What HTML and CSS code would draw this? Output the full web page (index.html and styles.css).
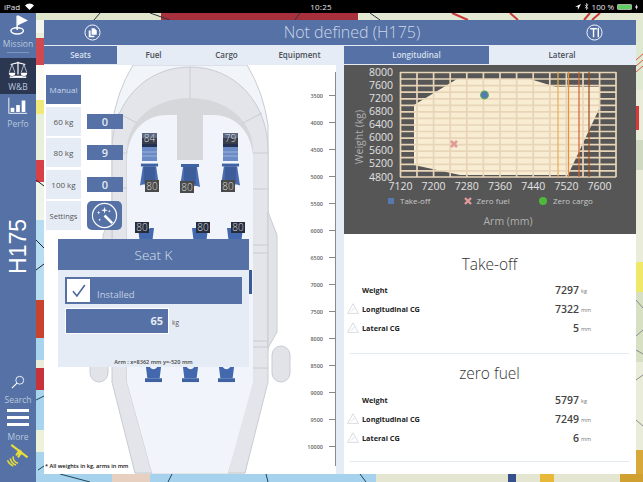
FILE: index.html
```html
<!DOCTYPE html>
<html lang="en">
<head>
<meta charset="utf-8">
<title>Not defined (H175)</title>
<link rel="stylesheet" href="styles.css">
</head>
<body>
<div class="screen">
  <svg class="map" viewBox="0 0 643 482" aria-hidden="true">
    <rect width="643" height="482" fill="#e9ecd8"/>
    <rect x="36" y="13" width="8" height="20" fill="#f4f6ee"/>
    <rect x="36" y="38" width="8" height="27" fill="#cf4a50"/>
    <rect x="36" y="65" width="8" height="35" fill="#fbfbf4"/>
    <rect x="36" y="100" width="8" height="14" fill="#f0e878"/>
    <rect x="36" y="114" width="8" height="46" fill="#e8f0dc"/>
    <rect x="36" y="160" width="8" height="22" fill="#d84048"/>
    <rect x="36" y="182" width="8" height="38" fill="#eef4e8"/>
    <rect x="36" y="220" width="8" height="80" fill="#b8dcf0"/>
    <rect x="36" y="300" width="8" height="38" fill="#c8422c"/>
    <rect x="36" y="338" width="8" height="22" fill="#a8d4ee"/>
    <rect x="36" y="368" width="8" height="22" fill="#c8323a"/>
    <rect x="36" y="390" width="8" height="40" fill="#a8d4ee"/>
    <rect x="36" y="430" width="8" height="22" fill="#eef2d8"/>
    <rect x="36" y="452" width="8" height="22" fill="#a8d4ee"/>
    <rect x="36" y="13" width="125" height="7" fill="#dfe6cc"/>
    <rect x="161" y="13" width="197" height="7" fill="#a8303c"/>
    <rect x="358" y="13" width="285" height="7" fill="#e2e8d2"/>
    <path d="M452 13l16 7M510 13l8 7M590 13l-6 7M600 13l-8 7" stroke="#c83a3a" stroke-width="2"/>
    <path d="M300 13l-5 7M370 13l10 7M100 13l-6 7M150 13l20 7" stroke="#334" stroke-width="1"/>
    <rect x="636" y="20" width="7" height="70" fill="#dfe8d0"/>
    <path d="M636 60l7-6M636 66l7-6M636 72l7-6" stroke="#d85a4a" stroke-width="1"/>
    <rect x="636" y="106" width="3" height="24" fill="#d83838"/>
    <rect x="636" y="140" width="7" height="30" fill="#cfd8c0"/>
    <rect x="636" y="262" width="7" height="30" fill="#f0e868"/>
    <rect x="636" y="292" width="7" height="70" fill="#d8e0c4"/>
    <path d="M636 300l7 8M643 330l-7 6M636 350l7 4M636 380l7-5M636 420l7 6" stroke="#667" stroke-width=".7"/>
    <rect x="636" y="450" width="7" height="32" fill="#d8a838"/>
    <rect x="36" y="474" width="340" height="8" fill="#a6d2ee"/>
    <rect x="376" y="474" width="267" height="8" fill="#e4e6d2"/>
    <rect x="112" y="474" width="38" height="8" fill="#e8d0c0"/>
    <rect x="508" y="474" width="8" height="8" fill="#35508c"/>
    <rect x="540" y="474" width="14" height="8" fill="#e8b838"/>
    <rect x="620" y="474" width="23" height="8" fill="#d0a030"/>
    <path d="M36 400l8-4M38 470l6-4M172 474l-4 8M266 474l2 8M360 474l6 8M60 474l30 8" stroke="#245" stroke-width="1" fill="none"/>
    <path d="M36 180l8 6M36 240l8 8M36 270l8-6" stroke="#223" stroke-width="1"/>
  </svg>

  <div class="status">
    <div class="status-left">
      <span>iPad</span>
      <svg class="wifi" viewBox="0 0 12 9" aria-hidden="true"><path d="M6 9L0 3a8.500 8.500 0 0 1 12 0z" fill="#fff"/></svg>
    </div>
    <span class="status-time">10:25</span>
    <div class="status-right">
      <svg class="loc" viewBox="0 0 8 8" aria-hidden="true"><path d="M8 0L0 3.600h3.800V8z" fill="#fff"/></svg>
      <svg class="bt" viewBox="0 0 6 9" aria-hidden="true"><path d="M1 2.200l4 4.300L3 8.500v-8l2 2-4 4.300" fill="none" stroke="#fff" stroke-width=".8"/></svg>
      <span>100 %</span>
      <span class="battery"><span class="battery-fill"></span></span>
      <svg class="bolt" viewBox="0 0 4 8" aria-hidden="true"><path d="M2.600 0L0 4.600h1.600L1.200 8 4 3.200H2.300z" fill="#fff"/></svg>
    </div>
  </div>

  <div class="layout">
    <nav class="nav">
      <div class="nav-item nav-mission">
        <svg class="nav-icon" viewBox="0 0 24 24" aria-hidden="true">
          <path d="M11 1l0 17" stroke="#fff" stroke-width="1.800"/>
          <path d="M11.500 0L24 6.500l-12.500 6z" fill="#fff"/>
          <ellipse cx="11" cy="19" rx="7.500" ry="3.800" fill="none" stroke="#fff" stroke-width="1.800"/>
        </svg>
        <span>Mission</span>
      </div>
      <div class="nav-sep"></div>
      <div class="nav-item nav-active">
        <svg class="nav-icon" viewBox="0 0 24 20" aria-hidden="true">
          <path d="M12 1v14M4 4l8-2 8 2M7 17h10" stroke="#fff" stroke-width="1.300" fill="none"/>
          <path d="M2 13h7a3.500 3.500 0 0 1-7 0zM15 13h7a3.500 3.500 0 0 1-7 0z" fill="#fff"/>
          <path d="M5.500 4L2.500 12.500M5.500 4l3 8.500M18.500 4l-3 8.500M18.500 4l3 8.500" stroke="#fff" stroke-width=".7"/>
          <rect x="3" y="17" width="18" height="1.600" fill="#fff"/>
        </svg>
        <span>W&amp;B</span>
      </div>
      <div class="nav-item nav-perfo">
        <svg class="nav-icon" viewBox="0 0 24 20" aria-hidden="true">
          <path d="M2 1v17h20" stroke="#fff" stroke-width="1" fill="none"/>
          <rect x="4" y="12" width="4" height="4.500" fill="#fff"/>
          <rect x="10" y="9" width="4" height="7.500" fill="#fff"/>
          <rect x="16" y="4" width="4" height="12.500" fill="#fff"/>
        </svg>
        <span>Perfo</span>
      </div>
      <div class="nav-logo">H175</div>
      <div class="nav-item nav-search">
        <svg class="nav-icon-small" viewBox="0 0 16 16" aria-hidden="true">
          <circle cx="10" cy="6" r="4.500" fill="none" stroke="#fff" stroke-width="1"/>
          <path d="M6.800 9.200L1 15" stroke="#fff" stroke-width="1.300"/>
        </svg>
        <span>Search</span>
      </div>
      <div class="nav-item nav-more">
        <div class="burger"><i></i><i></i><i></i></div>
        <span>More</span>
      </div>
      <svg class="nav-sat" viewBox="0 0 24 24" aria-hidden="true">
        <path d="M5 1l17 13M14 6l-4 6M16 8l-4 6" stroke="#e6dc3c" stroke-width="2.200" fill="none"/>
        <circle cx="14" cy="9" r="2.600" fill="#e6dc3c"/>
        <path d="M7 13a6 6 0 0 0 5 7M4 15a9 9 0 0 0 6 7M1 17a11 11 0 0 0 6 6" stroke="#e6dc3c" stroke-width="1.600" fill="none"/>
      </svg>
    </nav>

    <main class="main">
      <header class="topbar">
        <svg class="top-icon" viewBox="0 0 18 18" aria-hidden="true">
          <circle cx="9" cy="9" r="8" fill="none" stroke="#fff" stroke-width="1"/>
          <path d="M8 4.500h3l2.500 2.500v4.500H8z" fill="#fff"/>
          <path d="M5 7h2v5.500h4V14H5z" fill="#fff"/>
        </svg>
        <h1 class="title">Not defined (H175)</h1>
        <svg class="top-icon" viewBox="0 0 18 18" aria-hidden="true">
          <circle cx="9" cy="9" r="8" fill="none" stroke="#fff" stroke-width="1"/>
          <path d="M4.500 5h7M8 5v9M13 4v10" stroke="#fff" stroke-width="1.500" fill="none"/>
        </svg>
      </header>

      <div class="columns">
        <section class="left">
          <div class="tabs tabs-left">
            <div class="tab tab-on">Seats</div>
            <div class="tab">Fuel</div>
            <div class="tab">Cargo</div>
            <div class="tab">Equipment</div>
          </div>

          <div class="canvas">
            <svg class="plan" viewBox="44 65 292 409" aria-hidden="true">
              <defs>
                <symbol id="seat-front" viewBox="0 0 20 24">
                  <path d="M3 3h14l3 20-3-1H3l-3 1z" fill="#4a6db2"/>
                  <rect x="1" y="0" width="18" height="3" fill="#3f62a4"/>
                  <rect x="4" y="3" width="12" height="17" fill="#3c5c9a"/>
                </symbol>
                <symbol id="seat-back" viewBox="0 0 18 16">
                  <path d="M1 0h4q4 5 8 0h4l-1.500 12h-13z" fill="#4468ad"/>
                  <rect x="0" y="12" width="18" height="4" fill="#3f62a4"/>
                </symbol>
              </defs>

              <path class="hull" d="M133 65h114q16 26 21 60v225l-23 123h-110l-23-123V125q5-34 21-60z"/>
              <path class="wall" d="M112 150c0-46 32-83 78-83s78 37 78 83v232l-23 91h-17l20-91V150H127v232l25 91h-17l-23-91z"/>
              <path class="wing" d="M268 212l9 23v97l-9 16zM112 212l-9 23v97l9 16z"/>
              <rect class="wing" x="272" y="346" width="18" height="36" rx="9"/>
              <rect class="wing" x="90" y="346" width="18" height="36" rx="9"/>
              <path class="ring" d="M127 150c0-30 28-52 63-52s63 22 63 52v4h-126z"/>
              <path class="cabin" d="M127 160c0-28 18-45 40-45h46c22 0 40 17 40 45v222l-25 91h-76l-25-91z"/>
              <rect class="tee" x="177" y="115" width="26" height="45"/>
              <path class="seam" d="M190 67v31M118 113l19 10M262 113l-19 10M253 153h15M253 189h15M253 253h15M253 341h15M253 347h15M253 368h15M253 245h15M112 153h15M112 188h15"/>

              <rect class="cock" x="142" y="133" width="15" height="28"/>
              <rect class="cock-top" x="142" y="138" width="15" height="9"/>
              <path class="cock-line" d="M142 152h15M142 156h15"/>
              <rect class="cock" x="223" y="133" width="15" height="28"/>
              <rect class="cock-top" x="223" y="138" width="15" height="9"/>
              <path class="cock-line" d="M223 152h15M223 156h15"/>

              <use href="#seat-front" x="140" y="163" width="19" height="24"/>
              <use href="#seat-front" x="180" y="164" width="20" height="24"/>
              <use href="#seat-front" x="221" y="163" width="19" height="24"/>
              <use href="#seat-back" x="137" y="228" width="18" height="16"/>
              <use href="#seat-back" x="191" y="228" width="18" height="16"/>
              <use href="#seat-back" x="226" y="228" width="18" height="16"/>
              <use href="#seat-back" x="145" y="366" width="17" height="17"/>
              <use href="#seat-back" x="182" y="366" width="17" height="17"/>
              <use href="#seat-back" x="218" y="366" width="17" height="17"/>
              <path d="M249 270l3 0 0 24-3 0z" fill="#3a5a96"/>

              <rect class="tag-box tag-soft" x="142" y="133" width="15" height="11"/><text class="tag" x="149.500" y="142">84</text>
              <rect class="tag-box tag-soft" x="223" y="133" width="15" height="11"/><text class="tag" x="230.500" y="142">79</text>
              <rect class="tag-box" x="145" y="180" width="14" height="12"/><text class="tag" x="152" y="189.500">80</text>
              <rect class="tag-box" x="180" y="181" width="14" height="12"/><text class="tag" x="187" y="190.500">80</text>
              <rect class="tag-box" x="221" y="180" width="14" height="12"/><text class="tag" x="228" y="189.500">80</text>
              <rect class="tag-box tag-dark" x="135" y="222" width="14" height="11"/><text class="tag" x="142" y="231">80</text>
              <rect class="tag-box tag-dark" x="196" y="222" width="14" height="11"/><text class="tag" x="203" y="231">80</text>
              <rect class="tag-box tag-dark" x="231" y="222" width="14" height="11"/><text class="tag" x="238" y="231">80</text>

              <path class="axis" d="M335.500 72v394M329 95.500h6M329 122.500h6M329 149.500h6M329 176.500h6M329 203.500h6M329 230.500h6M329 257.500h6M329 284.500h6M329 311.500h6M329 338.500h6M329 365.500h6M329 392.500h6M329 419.500h6M329 446.500h6"/>
              <text class="tick" x="323" y="97.500">3500</text>
              <text class="tick" x="323" y="124.500">4000</text>
              <text class="tick" x="323" y="151.500">4500</text>
              <text class="tick" x="323" y="178.500">5000</text>
              <text class="tick" x="323" y="205.500">5500</text>
              <text class="tick" x="323" y="232.500">6000</text>
              <text class="tick" x="323" y="259.500">6500</text>
              <text class="tick" x="323" y="286.500">7000</text>
              <text class="tick" x="323" y="313.500">7500</text>
              <text class="tick" x="323" y="340.500">8000</text>
              <text class="tick" x="323" y="367.500">8500</text>
              <text class="tick" x="323" y="394.500">9000</text>
              <text class="tick" x="323" y="421.500">9500</text>
              <text class="tick" x="323" y="448.500">10000</text>
            </svg>

            <div class="controls">
              <div class="preset preset-on">Manual</div><div></div>
              <div class="preset">60 kg</div><div class="count">0</div>
              <div class="preset">80 kg</div><div class="count">9</div>
              <div class="preset">100 kg</div><div class="count">0</div>
              <div class="preset preset-small">Settings</div>
              <div class="wand">
                <svg viewBox="0 0 28 28" aria-hidden="true">
                  <circle cx="14" cy="14" r="12.500" fill="none" stroke="#fff" stroke-width="1.200"/>
                  <path d="M14 14l8 8" stroke="#fff" stroke-width="2.600"/>
                  <path d="M14 5l.8 2.700 2.700.8-2.700.8-.8 2.700-.8-2.700-2.700-.8 2.700-.8zM8 9l.5 1.500 1.500.5-1.500.5L8 13l-.5-1.500L6 11l1.500-.5zM9 17l.4 1.100 1.100.4-1.100.4L9 20l-.4-1.100-1.100-.4 1.100-.4zM19 8l.4 1.100 1.100.4-1.100.4-.4 1.100-.4-1.100-1.100-.4 1.100-.4z" fill="#fff"/>
                </svg>
              </div>
            </div>

            <div class="seat-pop">
              <div class="pop-head">Seat K</div>
              <div class="pop-body">
                <div class="installed">
                  <div class="check">
                    <svg viewBox="0 0 24 24" aria-hidden="true"><path d="M5 13l5 6L20 5" fill="none" stroke="#4a669c" stroke-width="2"/></svg>
                  </div>
                  <span>Installed</span>
                </div>
                <div class="weight-row">
                  <div class="weight-box">65</div>
                  <span class="weight-unit">kg</span>
                </div>
              </div>
              <div class="pop-arm">Arm : x=8362 mm y=-520 mm</div>
            </div>

            <div class="note">* All weights in kg, arms in mm</div>
          </div>
        </section>

        <section class="right">
          <div class="tabs tabs-right">
            <div class="tab tab-on">Longitudinal</div>
            <div class="tab">Lateral</div>
          </div>

          <svg class="chart" viewBox="344 65 292 169" role="img" aria-label="Weight and balance envelope">
            <rect x="344" y="65" width="292" height="169" fill="#565656"/>
            <path d="M414 105L457 79H530L556 87H600V107L568 175H460L414 165z" fill="#f8ecd2"/>
            <path class="grid-major" d="M400.500 72v105M417 72v105M433.600 72v105M450.200 72v105M466.800 72v105M483.400 72v105M500 72v105M516.600 72v105M533.200 72v105M549.800 72v105M566.400 72v105M583 72v105M599.600 72v105M616 72v105"/>
            <path class="grid-major" d="M400 72.500h216M400 79h216M400 85.600h216M400 92.200h216M400 98.800h216M400 105.300h216M400 111.900h216M400 118.400h216M400 125h216M400 131.500h216M400 138.100h216M400 144.600h216M400 151.200h216M400 157.700h216M400 164.300h216M400 170.800h216M400 177h216"/>
            <path d="M558 72v105" stroke="#e8b050" stroke-width="1.200"/>
            <path d="M568.500 72v105" stroke="#e89040" stroke-width="1.200"/>
            <path d="M579 72v105" stroke="#d86030" stroke-width="1.200"/>
            <path d="M589 72v105" stroke="#9a4a20" stroke-width="1.200"/>
            <path d="M451 141l6 6M457 141l-6 6" stroke="#e09a9a" stroke-width="2.600"/>
            <circle cx="484.500" cy="95" r="3.800" fill="#5a78b0" stroke="#4fa85a" stroke-width="1.200"/>

            <text class="ylab" x="393" y="75.500">8000</text>
            <text class="ylab" x="393" y="88.700">7600</text>
            <text class="ylab" x="393" y="101.800">7200</text>
            <text class="ylab" x="393" y="114.900">6800</text>
            <text class="ylab" x="393" y="128">6400</text>
            <text class="ylab" x="393" y="141.200">6000</text>
            <text class="ylab" x="393" y="154.300">5600</text>
            <text class="ylab" x="393" y="167.400">5200</text>
            <text class="ylab" x="393" y="180.500">4800</text>
            <text class="xlab" x="400.500" y="190">7120</text>
            <text class="xlab" x="433.600" y="190">7200</text>
            <text class="xlab" x="466.800" y="190">7280</text>
            <text class="xlab" x="500" y="190">7360</text>
            <text class="xlab" x="533.200" y="190">7440</text>
            <text class="xlab" x="566.400" y="190">7520</text>
            <text class="xlab" x="599.600" y="190">7600</text>
            <text class="axis-title" transform="translate(363 137) rotate(-90)">Weight (kg)</text>
            <text class="axis-title" x="508" y="225">Arm (mm)</text>
            <rect x="388" y="198" width="6" height="6" fill="#5a78b0"/>
            <path d="M465 198l6 6M471 198l-6 6" stroke="#e09a9a" stroke-width="2.400"/>
            <circle cx="543" cy="201" r="4" fill="#4fb83a"/>
            <text class="legend" x="400" y="204">Take-off</text>
            <text class="legend" x="476.500" y="204">Zero fuel</text>
            <text class="legend" x="553" y="204">Zero cargo</text>
          </svg>

          <div class="summary">
            <div class="block">
              <h2 class="block-title">Take-off</h2>
              <div class="row"><span></span><span class="row-label">Weight</span><span class="row-val">7297</span><span class="row-unit">kg</span></div>
              <div class="row"><svg class="warn" viewBox="0 0 12 11" aria-hidden="true"><use href="#warn-shape"/></svg><span class="row-label">Longitudinal CG</span><span class="row-val">7322</span><span class="row-unit">mm</span></div>
              <div class="row"><svg class="warn" viewBox="0 0 12 11" aria-hidden="true"><use href="#warn-shape"/></svg><span class="row-label">Lateral CG</span><span class="row-val">5</span><span class="row-unit">mm</span></div>
            </div>
            <div class="block">
              <h2 class="block-title">zero fuel</h2>
              <div class="row"><span></span><span class="row-label">Weight</span><span class="row-val">5797</span><span class="row-unit">kg</span></div>
              <div class="row"><svg class="warn" viewBox="0 0 12 11" aria-hidden="true"><use href="#warn-shape"/></svg><span class="row-label">Longitudinal CG</span><span class="row-val">7249</span><span class="row-unit">mm</span></div>
              <div class="row"><svg class="warn" viewBox="0 0 12 11" aria-hidden="true"><use href="#warn-shape"/></svg><span class="row-label">Lateral CG</span><span class="row-val">6</span><span class="row-unit">mm</span></div>
            </div>
          </div>
          <svg class="defs-holder" aria-hidden="true"><defs><path id="warn-shape" d="M6 .8L11.400 10.400H.6zM4 8.500L7.500 5" fill="none" stroke="#cfd3da" stroke-width=".8"/></defs></svg>
        </section>
      </div>
    </main>
  </div>
</div>
</body>
</html>
```

FILE: styles.css
```css
* { box-sizing: border-box; }
html, body { margin: 0; padding: 0; }
body { font-family: "Open Sans", "Noto Sans", sans-serif; background: #000; }

.screen { position: relative; width: 643px; height: 482px; overflow: hidden; }
.map { position: absolute; inset: 0; width: 643px; height: 482px; }

.status {
  position: relative; height: 13px; background: #000; color: #e8e8e8;
  display: grid; grid-template-columns: 1fr auto 1fr; align-items: center;
  padding: 0 5px 0 4px; font-size: 8px; line-height: 13px;
}
.status-left { display: flex; align-items: center; gap: 5px; }
.wifi { width: 9px; height: 7px; }
.status-time { font-size: 8px; letter-spacing: .2px; }
.status-right { display: flex; align-items: center; justify-content: flex-end; gap: 3px; }
.loc { width: 6px; height: 6px; }
.bt { width: 5px; height: 7px; }
.battery { display: block; width: 15px; height: 6px; border: 1px solid #aaa; border-radius: 1px; }
.battery-fill { display: block; width: 100%; height: 100%; background: #5fd05f; }
.bolt { width: 3px; height: 6px; }

.layout { position: relative; display: flex; height: 469px; }

.nav {
  width: 36px; height: 469px; background: #5571a5; color: #bac8de;
  display: flex; flex-direction: column; align-items: center; flex: none;
}
.nav-item { display: flex; flex-direction: column; align-items: center; width: 100%; font-size: 8.500px; line-height: 10px; }
.nav-icon { width: 22px; height: 20px; display: block; }
.nav-mission { padding-top: 2px; }
.nav-mission span { margin-top: 4px; }
.nav-sep { width: 22px; height: 1px; background: #7f96bf; margin: 3px 0 5px; }
.nav-active { background: #2b3650; height: 36px; padding-top: 2px; }
.nav-active span { margin-top: 2px; }
.nav-perfo { padding-top: 2px; }
.nav-perfo span { margin-top: 3px; }
.nav-logo {
  writing-mode: vertical-rl; transform: rotate(180deg);
  margin-top: 90px; font-size: 23px; line-height: 20px; font-weight: 400; color: #fff;
  font-family: "Liberation Sans", sans-serif;
}
.nav-search { margin-top: 101px; }
.nav-icon-small { width: 14px; height: 14px; display: block; margin-bottom: 6px; }
.nav-more { margin-top: 4px; }
.burger { display: flex; flex-direction: column; gap: 4px; margin-bottom: 6px; }
.burger i { display: block; width: 22px; height: 3px; background: #fff; }
.nav-sat { width: 24px; height: 23px; margin-top: 2px; }

.main {
  width: 592px; height: 454px; margin: 7px 0 0 8px; background: #e6ecf5;
  display: flex; flex-direction: column; gap: 1px;
}
.topbar {
  height: 25px; background: #5571a5; color: #ccd7ea; flex: none;
  display: grid; grid-template-columns: 124px 1fr 100px; align-items: center; justify-items: center;
}
.top-icon { width: 17px; height: 17px; }
.title { margin: 0; font-size: 16px; line-height: 25px; font-weight: 300; }
.topbar .top-icon:first-child { justify-self: start; margin-left: 40px; }
.topbar .top-icon:last-child { justify-self: end; margin-right: 33px; }

.columns { display: grid; grid-template-columns: 300px 292px; flex: 1; min-height: 0; }
.left, .right { display: flex; flex-direction: column; gap: 1px; min-height: 0; }
.tabs { height: 18px; display: grid; flex: none; background: #e6ecf5; }
.tabs-left { grid-template-columns: repeat(4, 73px); }
.tabs-right { grid-template-columns: 145px 146px; width: 291px; }
.tab { font-size: 8px; font-weight: 600; line-height: 18px; text-align: center; color: #4a4f58; }
.tab-on { background: #5571a5; color: #d8e0ee; }

.canvas { position: relative; width: 292px; flex: 1; background: #fff; }
.plan { position: absolute; inset: 0; width: 292px; height: 409px; }
.hull { fill: #f1f4f9; stroke: #c9ccd3; stroke-width: 1; }
.wall { fill: #e4e5ea; stroke: #c9ccd3; stroke-width: 1; }
.wing { fill: #e1e3e8; stroke: #c9ccd3; stroke-width: 1; }
.ring { fill: #d5d7db; }
.cabin { fill: #f1f5fb; }
.tee { fill: #d5d7db; }
.seam { fill: none; stroke: #c9ccd3; stroke-width: 1; }
.cock { fill: #6b8bc6; }
.cock-top { fill: #23304f; }
.cock-line { fill: none; stroke: #a9bde0; stroke-width: .8; }
.tag-box { fill: #4a4a4a; }
.tag-dark { fill: #262d3e; }
.tag-soft { opacity: .55; }
.tag { font-size: 10px; fill: #dcdcdc; text-anchor: middle; font-weight: 300; }
.axis { fill: none; stroke: #8a8a8a; stroke-width: 1; }
.tick { font-size: 5.500px; font-weight: 600; fill: #666; text-anchor: end; }

.controls {
  position: absolute; left: 2px; top: 10px;
  display: grid; grid-template-columns: 35px 36px; grid-auto-rows: 29px;
  column-gap: 6px; row-gap: 2.500px; align-items: center;
}
.preset {
  height: 29px; background: #e6ecf5; color: #555; font-size: 8px;
  display: flex; align-items: center; justify-content: center;
}
.preset-on { background: #5571a5; color: #ccd7ea; }
.preset-small { font-size: 7.500px; }
.count {
  height: 15px; background: #5571a5; color: #e4eaf4; font-size: 11px; font-weight: 600;
  display: flex; align-items: center; justify-content: center;
}
.wand {
  height: 29px; width: 35px; background: #5571a5; border-radius: 5px;
  display: flex; align-items: center; justify-content: center;
}
.wand svg { width: 27px; height: 27px; }

.seat-pop {
  position: absolute; left: 14px; top: 174px; width: 191px; height: 128px;
  background: #e6ecf5; display: flex; flex-direction: column;
}
.pop-head {
  height: 31px; background: #5571a5; color: #d8e0ee; font-size: 13.500px; font-weight: 300;
  display: flex; align-items: center; justify-content: center; flex: none;
}
.pop-body { padding: 7px 7px 0; display: flex; flex-direction: column; gap: 4px; flex: 1; }
.installed {
  height: 27px; background: #5571a5; padding: 2px; width: 177px;
  display: flex; align-items: center; gap: 7px; color: #c4d0e4; font-size: 9.500px;
}
.installed span { padding-top: 7px; }
.check { width: 23px; height: 23px; background: #fff; flex: none; padding: 2px; }
.check svg { width: 19px; height: 19px; display: block; }
.weight-row { display: flex; align-items: center; gap: 3px; }
.weight-box {
  width: 104px; height: 26px; background: #5571a5; border: 1px solid #fff; color: #e4eaf4;
  font-size: 11px; font-weight: 700; text-align: right; line-height: 24px; padding-right: 5px;
}
.weight-unit { font-size: 6.500px; color: #555; padding-top: 2px; }
.pop-arm { font-size: 5.600px; line-height: 8px; color: #444; text-align: center; padding-bottom: 1px; font-weight: 600; }

.note { position: absolute; left: 1px; bottom: 3px; font-size: 5.600px; line-height: 9px; color: #111; font-weight: 600; }

.chart { display: block; width: 292px; height: 169px; flex: none; }
.grid-major { fill: none; stroke: #e8d5b8; stroke-width: 1.700; }
.ylab { font-size: 10.500px; fill: #e2e2e2; text-anchor: end; }
.xlab { font-size: 10.500px; fill: #e2e2e2; text-anchor: middle; }
.legend { font-size: 8px; fill: #c8c8c8; }
.axis-title { font-size: 10.500px; fill: #b0b0b0; text-anchor: middle; }

.summary { width: 292px; flex: 1; background: #fff; margin-top: -1px; padding: 0 7px 0 6px; }
.block { border-bottom: 1px solid #e4e9f2; height: 108px; }
.block:first-child { height: 120px; padding-top: 11px; }
.block-title { margin: 0; height: 36px; padding-top: 8px; font-size: 15.500px; line-height: 22px; font-weight: 300; color: #333; text-align: center; }
.block:first-child .block-title { height: 35px; padding-top: 8px; }
.row {
  display: grid; grid-template-columns: 12px 1fr 80px 50px; align-items: center; column-gap: 0;
  height: 19px;
}
.row-label { font-size: 7.300px; font-weight: 700; color: #222; }
.row-val { font-size: 10.500px; font-weight: 600; color: #444; text-align: right; }
.row-unit { font-size: 5.500px; color: #777; padding-left: 2px; padding-top: 2px; }
.warn { width: 12px; height: 11px; margin-left: -3px; }
.defs-holder { position: absolute; width: 0; height: 0; }
```
